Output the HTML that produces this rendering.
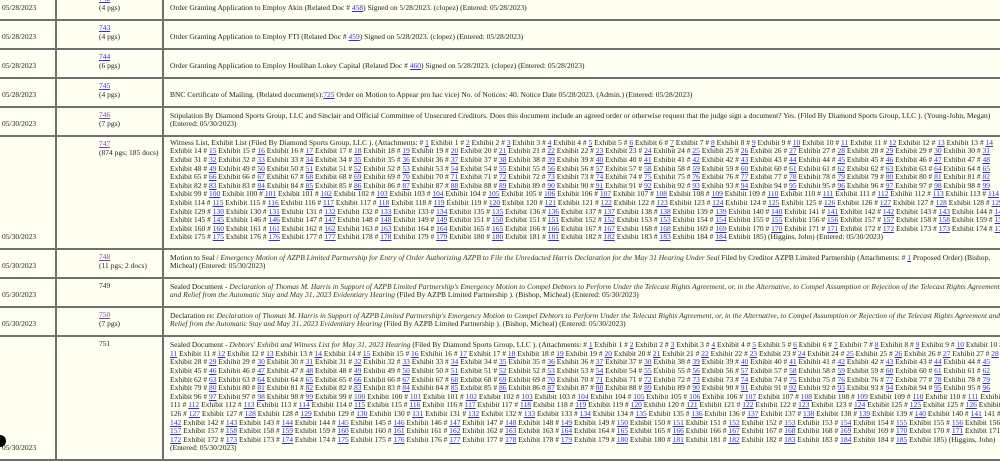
<!DOCTYPE html>
<html><head><meta charset="utf-8"><style>
html,body{margin:0;padding:0;background:#fffff2;width:1000px;height:462px;overflow:hidden}
body{font-family:"Liberation Serif",serif;font-size:7.5px;color:#222;position:relative}
.r{position:absolute;left:0;width:1000px;border-bottom:2px solid #707070;box-sizing:border-box}
.c{position:absolute;top:0;bottom:0;box-sizing:border-box;line-height:8.6px;white-space:nowrap}
.d{left:0;width:57px;border-right:2px solid #707070;padding-left:2px}
.n{left:57px;width:107px;border-right:2px solid #707070;padding-left:42px;padding-top:5px}
.t{left:164px;right:-20px;padding-left:6px}
.b{display:flex;flex-direction:column;justify-content:flex-end;padding-bottom:6px}
a{color:#3030d8;text-decoration:underline}
a.v{color:#7a4aa0}
i{color:#333}
.dot{position:absolute;left:-6px;top:435px;width:12px;height:12px;border-radius:50%;background:#000}
</style></head><body>

<div class="r" style="top:-10px;height:31px">
<div class="c d b"><div>05/28/2023</div></div>
<div class="c n"><a>742</a><br>(4 pgs)</div>
<div class="c t b"><div>Order Granting Application to Employ Akin (Related Doc # <a>458</a>) Signed on 5/28/2023. (clopez) (Entered: 05/28/2023)</div></div>
</div>

<div class="r" style="top:19px;height:31px">
<div class="c d b"><div>05/28/2023</div></div>
<div class="c n"><a>743</a><br>(4 pgs)</div>
<div class="c t b"><div>Order Granting Application to Employ FTI (Related Doc # <a>459</a>) Signed on 5/28/2023. (clopez) (Entered: 05/28/2023)</div></div>
</div>

<div class="r" style="top:48px;height:31px">
<div class="c d b"><div>05/28/2023</div></div>
<div class="c n"><a>744</a><br>(6 pgs)</div>
<div class="c t b"><div>Order Granting Application to Employ Houlihan Lokey Capital (Related Doc # <a>460</a>) Signed on 5/28/2023. (clopez) (Entered: 05/28/2023)</div></div>
</div>

<div class="r" style="top:77px;height:31px">
<div class="c d b"><div>05/28/2023</div></div>
<div class="c n"><a>745</a><br>(4 pgs)</div>
<div class="c t b"><div>BNC Certificate of Mailing. (Related document(s):<a>725</a> Order on Motion to Appear pro hac vice) No. of Notices: 40. Notice Date 05/28/2023. (Admin.) (Entered: 05/28/2023)</div></div>
</div>

<div class="r" style="top:106px;height:31px">
<div class="c d b"><div>05/30/2023</div></div>
<div class="c n"><a class="v">746</a><br>(7 pgs)</div>
<div class="c t b"><div>Stipulation By Diamond Sports Group, LLC and Sinclair and Official Committee of Unsecured Creditors. Does this document include an agreed order or otherwise request that the judge sign a document? Yes. (Filed By Diamond Sports Group, LLC ). (Young-John, Megan)<br>(Entered: 05/30/2023)</div></div>
</div>

<div class="r" style="top:135px;height:115px">
<div class="c d b"><div>05/30/2023</div></div>
<div class="c n"><a class="v">747</a><br>(874 pgs; 185 docs)</div>
<div class="c t b"><div>
Witness List, Exhibit List (Filed By Diamond Sports Group, LLC ). (Attachments: # <a>1</a> Exhibit 1 # <a>2</a> Exhibit 2 # <a>3</a> Exhibit 3 # <a>4</a> Exhibit 4 # <a>5</a> Exhibit 5 # <a>6</a> Exhibit 6 # <a>7</a> Exhibit 7 # <a>8</a> Exhibit 8 # <a>9</a> Exhibit 9 # <a>10</a> Exhibit 10 # <a>11</a> Exhibit 11 # <a>12</a> Exhibit 12 # <a>13</a> Exhibit 13 # <a>14</a><br>
Exhibit 14 # <a>15</a> Exhibit 15 # <a>16</a> Exhibit 16 # <a>17</a> Exhibit 17 # <a>18</a> Exhibit 18 # <a>19</a> Exhibit 19 # <a>20</a> Exhibit 20 # <a>21</a> Exhibit 21 # <a>22</a> Exhibit 22 # <a>23</a> Exhibit 23 # <a>24</a> Exhibit 24 # <a>25</a> Exhibit 25 # <a>26</a> Exhibit 26 # <a>27</a> Exhibit 27 # <a>28</a> Exhibit 28 # <a>29</a> Exhibit 29 # <a>30</a> Exhibit 30 # <a>31</a><br>
Exhibit 31 # <a>32</a> Exhibit 32 # <a>33</a> Exhibit 33 # <a>34</a> Exhibit 34 # <a>35</a> Exhibit 35 # <a>36</a> Exhibit 36 # <a>37</a> Exhibit 37 # <a>38</a> Exhibit 38 # <a>39</a> Exhibit 39 # <a>40</a> Exhibit 40 # <a>41</a> Exhibit 41 # <a>42</a> Exhibit 42 # <a>43</a> Exhibit 43 # <a>44</a> Exhibit 44 # <a>45</a> Exhibit 45 # <a>46</a> Exhibit 46 # <a>47</a> Exhibit 47 # <a>48</a><br>
Exhibit 48 # <a>49</a> Exhibit 49 # <a>50</a> Exhibit 50 # <a>51</a> Exhibit 51 # <a>52</a> Exhibit 52 # <a>53</a> Exhibit 53 # <a>54</a> Exhibit 54 # <a>55</a> Exhibit 55 # <a>56</a> Exhibit 56 # <a>57</a> Exhibit 57 # <a>58</a> Exhibit 58 # <a>59</a> Exhibit 59 # <a>60</a> Exhibit 60 # <a>61</a> Exhibit 61 # <a>62</a> Exhibit 62 # <a>63</a> Exhibit 63 # <a>64</a> Exhibit 64 # <a>65</a><br>
Exhibit 65 # <a>66</a> Exhibit 66 # <a>67</a> Exhibit 67 # <a>68</a> Exhibit 68 # <a>69</a> Exhibit 69 # <a>70</a> Exhibit 70 # <a>71</a> Exhibit 71 # <a>72</a> Exhibit 72 # <a>73</a> Exhibit 73 # <a>74</a> Exhibit 74 # <a>75</a> Exhibit 75 # <a>76</a> Exhibit 76 # <a>77</a> Exhibit 77 # <a>78</a> Exhibit 78 # <a>79</a> Exhibit 79 # <a>80</a> Exhibit 80 # <a>81</a> Exhibit 81 # <a>82</a><br>
Exhibit 82 # <a>83</a> Exhibit 83 # <a>84</a> Exhibit 84 # <a>85</a> Exhibit 85 # <a>86</a> Exhibit 86 # <a>87</a> Exhibit 87 # <a>88</a> Exhibit 88 # <a>89</a> Exhibit 89 # <a>90</a> Exhibit 90 # <a>91</a> Exhibit 91 # <a>92</a> Exhibit 92 # <a>93</a> Exhibit 93 # <a>94</a> Exhibit 94 # <a>95</a> Exhibit 95 # <a>96</a> Exhibit 96 # <a>97</a> Exhibit 97 # <a>98</a> Exhibit 98 # <a>99</a><br>
Exhibit 99 # <a>100</a> Exhibit 100 # <a>101</a> Exhibit 101 # <a>102</a> Exhibit 102 # <a>103</a> Exhibit 103 # <a>104</a> Exhibit 104 # <a>105</a> Exhibit 105 # <a>106</a> Exhibit 106 # <a>107</a> Exhibit 107 # <a>108</a> Exhibit 108 # <a>109</a> Exhibit 109 # <a>110</a> Exhibit 110 # <a>111</a> Exhibit 111 # <a>112</a> Exhibit 112 # <a>113</a> Exhibit 113 # <a>114</a><br>
Exhibit 114 # <a>115</a> Exhibit 115 # <a>116</a> Exhibit 116 # <a>117</a> Exhibit 117 # <a>118</a> Exhibit 118 # <a>119</a> Exhibit 119 # <a>120</a> Exhibit 120 # <a>121</a> Exhibit 121 # <a>122</a> Exhibit 122 # <a>123</a> Exhibit 123 # <a>124</a> Exhibit 124 # <a>125</a> Exhibit 125 # <a>126</a> Exhibit 126 # <a>127</a> Exhibit 127 # <a>128</a> Exhibit 128 # <a>129</a><br>
Exhibit 129 # <a>130</a> Exhibit 130 # <a>131</a> Exhibit 131 # <a>132</a> Exhibit 132 # <a>133</a> Exhibit 133 # <a>134</a> Exhibit 135 # <a>135</a> Exhibit 136 # <a>136</a> Exhibit 137 # <a>137</a> Exhibit 138 # <a>138</a> Exhibit 139 # <a>139</a> Exhibit 140 # <a>140</a> Exhibit 141 # <a>141</a> Exhibit 142 # <a>142</a> Exhibit 143 # <a>143</a> Exhibit 144 # <a>144</a><br>
Exhibit 145 # <a>145</a> Exhibit 146 # <a>146</a> Exhibit 147 # <a>147</a> Exhibit 148 # <a>148</a> Exhibit 149 # <a>149</a> Exhibit 151 # <a>150</a> Exhibit 151 # <a>151</a> Exhibit 152 # <a>152</a> Exhibit 153 # <a>153</a> Exhibit 154 # <a>154</a> Exhibit 155 # <a>155</a> Exhibit 156 # <a>156</a> Exhibit 157 # <a>157</a> Exhibit 158 # <a>158</a> Exhibit 159 # <a>159</a><br>
Exhibit 160 # <a>160</a> Exhibit 161 # <a>161</a> Exhibit 162 # <a>162</a> Exhibit 163 # <a>163</a> Exhibit 164 # <a>164</a> Exhibit 165 # <a>165</a> Exhibit 166 # <a>166</a> Exhibit 167 # <a>167</a> Exhibit 168 # <a>168</a> Exhibit 169 # <a>169</a> Exhibit 170 # <a>170</a> Exhibit 171 # <a>171</a> Exhibit 172 # <a>172</a> Exhibit 173 # <a>173</a> Exhibit 174 # <a>174</a><br>
Exhibit 175 # <a>175</a> Exhibit 176 # <a>176</a> Exhibit 177 # <a>177</a> Exhibit 178 # <a>178</a> Exhibit 179 # <a>179</a> Exhibit 180 # <a>180</a> Exhibit 181 # <a>181</a> Exhibit 182 # <a>182</a> Exhibit 183 # <a>183</a> Exhibit 184 # <a>184</a> Exhibit 185) (Higgins, John) (Entered: 05/30/2023)
</div></div>
</div>

<div class="r" style="top:248px;height:31px">
<div class="c d b"><div>05/30/2023</div></div>
<div class="c n"><a class="v">748</a><br>(11 pgs; 2 docs)</div>
<div class="c t b"><div>Motion to Seal / <i>Emergency Motion of AZPB Limited Partnership for Entry of Order Authorizing AZPB to File the Unredacted Harris Declaration for the May 31 Hearing Under Seal</i> Filed by Creditor AZPB Limited Partnership (Attachments: # <a>1</a> Proposed Order) (Bishop,<br>Micheal) (Entered: 05/30/2023)</div></div>
</div>

<div class="r" style="top:277px;height:31px">
<div class="c d b"><div>05/30/2023</div></div>
<div class="c n">749</div>
<div class="c t b"><div>Sealed Document - <i>Declaration of Thomas M. Harris in Support of AZPB Limited Partnership's Emergency Motion to Compel Debtors to Perform Under the Telecast Rights Agreement, or, in the Alternative, to Compel Assumption or Rejection of the Telecast Rights Agreement</i><br><i>and Relief from the Automatic Stay and May 31, 2023 Evidentiary Hearing</i> (Filed By AZPB Limited Partnership ). (Bishop, Micheal) (Entered: 05/30/2023)</div></div>
</div>

<div class="r" style="top:306px;height:31px">
<div class="c d b"><div>05/30/2023</div></div>
<div class="c n"><a class="v">750</a><br>(7 pgs)</div>
<div class="c t b"><div>Declaration re: <i>Declaration of Thomas M. Harris in Support of AZPB Limited Partnership's Emergency Motion to Compel Debtors to Perform Under the Telecast Rights Agreement, or, in the Alternative, to Compel Assumption or Rejection of the Telecast Rights Agreement and</i><br><i>Relief from the Automatic Stay and May 31, 2023 Evidentiary Hearing</i> (Filed By AZPB Limited Partnership ). (Bishop, Micheal) (Entered: 05/30/2023)</div></div>
</div>

<div class="r" style="top:335px;height:126px">
<div class="c d b"><div>05/30/2023</div></div>
<div class="c n">751</div>
<div class="c t b"><div>
Sealed Document - <i>Debtors' Exhibit and Witness List for May 31, 2023 Hearing</i> (Filed By Diamond Sports Group, LLC ). (Attachments: # <a>1</a> Exhibit 1 # <a>2</a> Exhibit 2 # <a>3</a> Exhibit 3 # <a>4</a> Exhibit 4 # <a>5</a> Exhibit 5 # <a>6</a> Exhibit 6 # <a>7</a> Exhibit 7 # <a>8</a> Exhibit 8 # <a>9</a> Exhibit 9 # <a>10</a> Exhibit 10 #<br>
<a>11</a> Exhibit 11 # <a>12</a> Exhibit 12 # <a>13</a> Exhibit 13 # <a>14</a> Exhibit 14 # <a>15</a> Exhibit 15 # <a>16</a> Exhibit 16 # <a>17</a> Exhibit 17 # <a>18</a> Exhibit 18 # <a>19</a> Exhibit 19 # <a>20</a> Exhibit 20 # <a>21</a> Exhibit 21 # <a>22</a> Exhibit 22 # <a>23</a> Exhibit 23 # <a>24</a> Exhibit 24 # <a>25</a> Exhibit 25 # <a>26</a> Exhibit 26 # <a>27</a> Exhibit 27 # <a>28</a><br>
Exhibit 28 # <a>29</a> Exhibit 29 # <a>30</a> Exhibit 30 # <a>31</a> Exhibit 31 # <a>32</a> Exhibit 32 # <a>33</a> Exhibit 33 # <a>34</a> Exhibit 34 # <a>35</a> Exhibit 35 # <a>36</a> Exhibit 36 # <a>37</a> Exhibit 37 # <a>38</a> Exhibit 38 # <a>39</a> Exhibit 39 # <a>40</a> Exhibit 40 # <a>41</a> Exhibit 41 # <a>42</a> Exhibit 42 # <a>43</a> Exhibit 43 # <a>44</a> Exhibit 44 # <a>45</a><br>
Exhibit 45 # <a>46</a> Exhibit 46 # <a>47</a> Exhibit 47 # <a>48</a> Exhibit 48 # <a>49</a> Exhibit 49 # <a>50</a> Exhibit 50 # <a>51</a> Exhibit 51 # <a>52</a> Exhibit 52 # <a>53</a> Exhibit 53 # <a>54</a> Exhibit 54 # <a>55</a> Exhibit 55 # <a>56</a> Exhibit 56 # <a>57</a> Exhibit 57 # <a>58</a> Exhibit 58 # <a>59</a> Exhibit 59 # <a>60</a> Exhibit 60 # <a>61</a> Exhibit 61 # <a>62</a><br>
Exhibit 62 # <a>63</a> Exhibit 63 # <a>64</a> Exhibit 64 # <a>65</a> Exhibit 65 # <a>66</a> Exhibit 66 # <a>67</a> Exhibit 67 # <a>68</a> Exhibit 68 # <a>69</a> Exhibit 69 # <a>70</a> Exhibit 70 # <a>71</a> Exhibit 71 # <a>72</a> Exhibit 72 # <a>73</a> Exhibit 73 # <a>74</a> Exhibit 74 # <a>75</a> Exhibit 75 # <a>76</a> Exhibit 76 # <a>77</a> Exhibit 77 # <a>78</a> Exhibit 78 # <a>79</a><br>
Exhibit 79 # <a>80</a> Exhibit 80 # <a>81</a> Exhibit 81 # <a>82</a> Exhibit 82 # <a>83</a> Exhibit 83 # <a>84</a> Exhibit 84 # <a>85</a> Exhibit 85 # <a>86</a> Exhibit 86 # <a>87</a> Exhibit 87 # <a>88</a> Exhibit 88 # <a>89</a> Exhibit 89 # <a>90</a> Exhibit 90 # <a>91</a> Exhibit 91 # <a>92</a> Exhibit 92 # <a>93</a> Exhibit 93 # <a>94</a> Exhibit 94 # <a>95</a> Exhibit 95 # <a>96</a><br>
Exhibit 96 # <a>97</a> Exhibit 97 # <a>98</a> Exhibit 98 # <a>99</a> Exhibit 99 # <a>100</a> Exhibit 100 # <a>101</a> Exhibit 101 # <a>102</a> Exhibit 102 # <a>103</a> Exhibit 103 # <a>104</a> Exhibit 104 # <a>105</a> Exhibit 105 # <a>106</a> Exhibit 106 # <a>107</a> Exhibit 107 # <a>108</a> Exhibit 108 # <a>109</a> Exhibit 109 # <a>110</a> Exhibit 110 # <a>111</a> Exhibit<br>
111 # <a>112</a> Exhibit 112 # <a>113</a> Exhibit 113 # <a>114</a> Exhibit 114 # <a>115</a> Exhibit 115 # <a>116</a> Exhibit 116 # <a>117</a> Exhibit 117 # <a>118</a> Exhibit 118 # <a>119</a> Exhibit 119 # <a>120</a> Exhibit 120 # <a>121</a> Exhibit 121 # <a>122</a> Exhibit 122 # <a>123</a> Exhibit 123 # <a>124</a> Exhibit 125 # <a>125</a> Exhibit 125 # <a>126</a> Exhibit<br>
126 # <a>127</a> Exhibit 127 # <a>128</a> Exhibit 128 # <a>129</a> Exhibit 129 # <a>130</a> Exhibit 130 # <a>131</a> Exhibit 131 # <a>132</a> Exhibit 132 # <a>133</a> Exhibit 133 # <a>134</a> Exhibit 134 # <a>135</a> Exhibit 135 # <a>136</a> Exhibit 136 # <a>137</a> Exhibit 137 # <a>138</a> Exhibit 138 # <a>139</a> Exhibit 139 # <a>140</a> Exhibit 140 # <a>141</a> 141 #<br>
<a>142</a> Exhibit 142 # <a>143</a> Exhibit 143 # <a>144</a> Exhibit 144 # <a>145</a> Exhibit 145 # <a>146</a> Exhibit 146 # <a>147</a> Exhibit 147 # <a>148</a> Exhibit 148 # <a>149</a> Exhibit 149 # <a>150</a> Exhibit 150 # <a>151</a> Exhibit 151 # <a>152</a> Exhibit 152 # <a>153</a> Exhibit 153 # <a>154</a> Exhibit 154 # <a>155</a> Exhibit 155 # <a>156</a> Exhibit 156 #<br>
<a>157</a> Exhibit 157 # <a>158</a> Exhibit 158 # <a>159</a> Exhibit 159 # <a>160</a> Exhibit 160 # <a>161</a> Exhibit 161 # <a>162</a> Exhibit 162 # <a>163</a> Exhibit 163 # <a>164</a> Exhibit 164 # <a>165</a> Exhibit 165 # <a>166</a> Exhibit 166 # <a>167</a> Exhibit 167 # <a>168</a> Exhibit 168 # <a>169</a> Exhibit 169 # <a>170</a> Exhibit 170 # <a>171</a> Exhibit 171 #<br>
<a>172</a> Exhibit 172 # <a>173</a> Exhibit 173 # <a>174</a> Exhibit 174 # <a>175</a> Exhibit 175 # <a>176</a> Exhibit 176 # <a>177</a> Exhibit 177 # <a>178</a> Exhibit 178 # <a>179</a> Exhibit 179 # <a>180</a> Exhibit 180 # <a>181</a> Exhibit 181 # <a>182</a> Exhibit 182 # <a>183</a> Exhibit 183 # <a>184</a> Exhibit 184 # <a>185</a> Exhibit 185) (Higgins, John)<br>
(Entered: 05/30/2023)
</div></div>
</div>

<div class="dot"></div>
</body></html>
